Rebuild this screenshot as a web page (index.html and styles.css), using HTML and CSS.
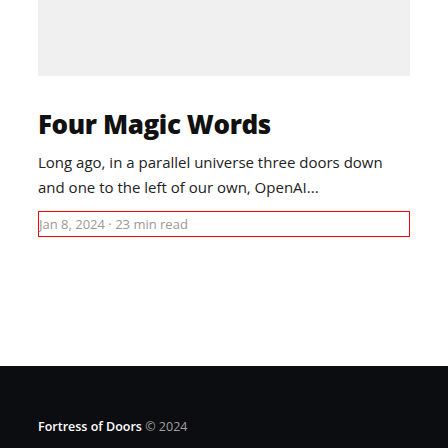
FILE: index.html
```html
<!DOCTYPE html>
<html>
<head>
<meta charset="utf-8">
<link rel="stylesheet" href="styles.css">
</head>
<body>
<div class="page">
  <main class="container">
    <div class="hero"></div>
    <article class="post">
      <h1 class="title">Four Magic Words</h1>
      <p class="excerpt">Long ago, in a parallel universe three doors down and one to the left of our own, OpenAI...</p>
      <div class="meta">Jan 8, 2024 · 23 min read</div>
    </article>
  </main>
  <footer class="footer">
    <div class="container footer-inner">
      <span class="brand">Fortress of Doors</span> <span class="copy">© 2024</span>
    </div>
  </footer>
</div>
</body>
</html>
```
FILE: styles.css
```css
html, body {
  margin: 0;
  padding: 0;
  background: #ffffff;
}
body {
  font-family: "Open Sans", "Noto Sans", sans-serif;
  color: #1a1a1a;
}
.page {
  display: flex;
  flex-direction: column;
  min-height: 448px;
}
.container {
  width: 372px;
  margin: 0 auto;
}
main.container {
  flex: 1;
}
.hero {
  height: 76px;
  background: #f0f0f0;
}
.post {
  padding-top: 32px;
}
.title {
  margin: 0;
  font-family: "Open Sans", sans-serif;
  font-weight: 800;
  font-size: 26px;
  line-height: 32px;
  color: #111111;
  letter-spacing: -0.4px;
}
.excerpt {
  margin: 10px 0 0;
  font-size: 15px;
  line-height: 25px;
  color: #222222;
}
.meta {
  margin-top: 11px;
  border: 1px solid #ff0000;
  height: 24px;
  line-height: 24px;
  font-size: 13px;
  color: #999999;
  overflow: hidden;
  white-space: nowrap;
}
.footer {
  background: #0c0d10;
  height: 82px;
  display: flex;
  align-items: flex-end;
}
.footer-inner {
  padding-bottom: 11px;
  font-size: 12.5px;
  line-height: 20px;
}
.brand {
  color: #ffffff;
  font-weight: 600;
}
.copy {
  color: #a0a0a0;
}
```
